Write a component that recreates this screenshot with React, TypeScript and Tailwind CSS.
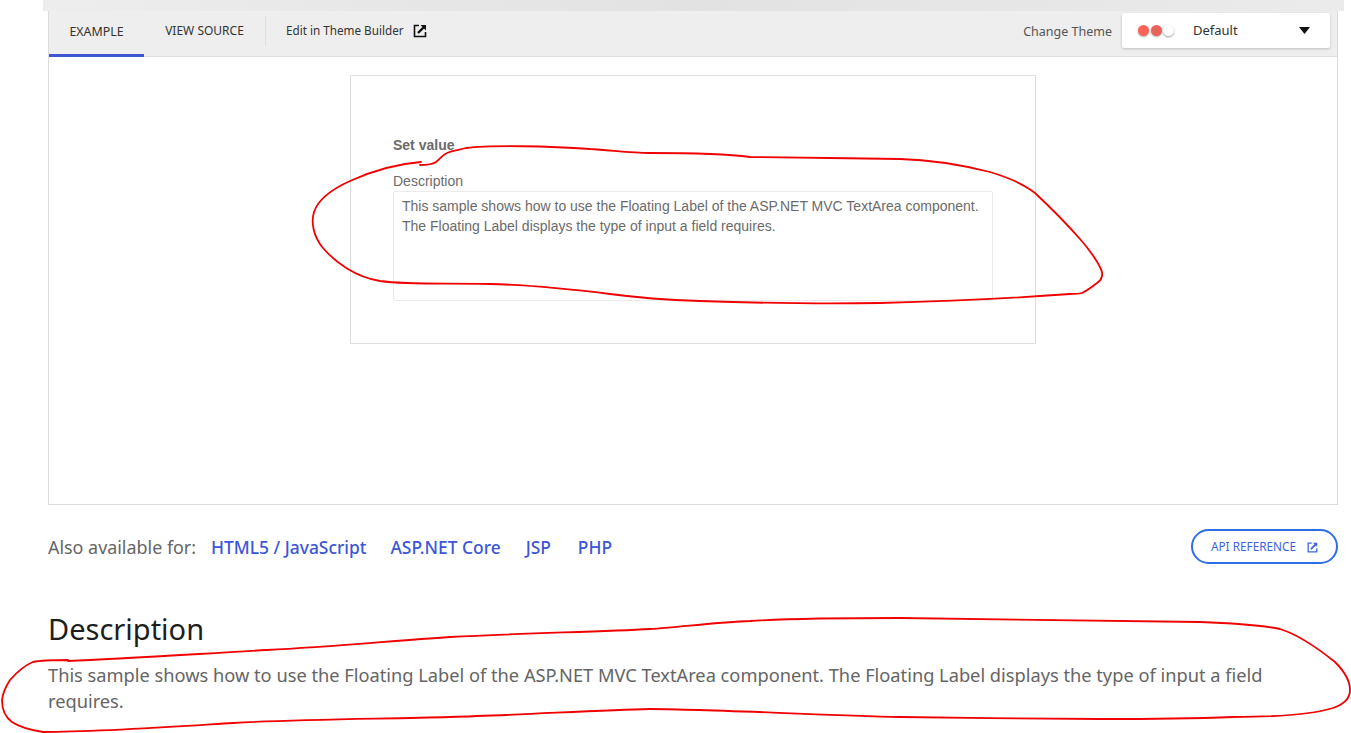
import React from "react";

const ExtIcon = ({ className }: { className: string }) => (
  <svg viewBox="0 0 14 14" className={className} fill="none" stroke="currentColor">
    <path d="M6 1.5H1.5v11h11V8" strokeWidth="1.6" />
    <path d="M7.5 1H13v5.5z" fill="currentColor" stroke="none" />
    <path d="M5 9l6-6" strokeWidth="2.4" />
  </svg>
);

export default function App() {
  return (
    <div className="relative h-[733px] overflow-hidden bg-white font-['Noto_Sans',sans-serif]">
      <div className="ml-[43px] h-[11px] w-[1301px] bg-gradient-to-r from-[#ededed] via-[#e2e2e2] to-[#ebebeb]" />
      <div className="ml-[48px] flex h-[494px] w-[1290px] flex-col border-x border-b border-[#dcdcdc]">
        <div className="flex h-[46px] shrink-0 items-stretch border-b border-[#dedede] bg-[#eeeeee] pr-[7px]">
          <div className="-mb-px flex w-[95px] items-center justify-center border-b-[3px] border-[#3c56d6] pb-[1px] text-[12.4px] text-[#333]">
            EXAMPLE
          </div>
          <div className="flex flex-1 items-center pb-[6px]">
            <div className="mt-[1px] flex w-[121px] items-center justify-center text-[12px] text-[#333]">VIEW SOURCE</div>
            <div className="h-[30px] w-px bg-[#dddddd]" />
            <div className="ml-[20px] mt-[1px] text-[11.7px] text-[#333]">Edit in Theme Builder</div>
            <ExtIcon className="ml-[9px] h-[14px] w-[14px] text-[#111]" />
            <div className="ml-auto mt-[3px] text-[12.5px] text-[#555]">Change Theme</div>
            <div className="ml-[10px] flex h-[35px] w-[208px] items-center rounded-[2px] bg-white pl-[16px] pr-[20px] shadow-[0_1px_3px_rgba(0,0,0,0.2)]">
              <span className="h-[11px] w-[11px] rounded-full bg-[#ff6358] shadow-[0_1px_2px_rgba(0,0,0,0.3)]" />
              <span className="ml-[2px] h-[11px] w-[11px] rounded-full bg-[#e9635a] shadow-[0_1px_2px_rgba(0,0,0,0.3)]" />
              <span className="ml-[1px] h-[11px] w-[11px] rounded-full bg-white shadow-[0_1px_2px_rgba(0,0,0,0.4)]" />
              <span className="ml-[19px] mt-[1px] text-[13px] text-[#333]">Default</span>
              <svg viewBox="0 0 11 7" className="ml-auto h-[7px] w-[11px] text-[#111]">
                <path d="M0 0h11L5.5 7z" fill="currentColor" />
              </svg>
            </div>
          </div>
        </div>
        <div className="flex flex-1 justify-center pt-[18px]">
          <div className="h-[269px] w-[686px] border border-[#dedede] pl-[42px] pt-[61px] font-['Liberation_Sans',sans-serif] text-[14px] text-[#6b6b6b]">
            <div className="text-[14px] font-bold leading-[17px]">Set value</div>
            <div className="mt-[19px] leading-[17px]">Description</div>
            <div className="mt-[1px] h-[110px] w-[600px] rounded-[2px] border border-[#ebebeb] px-[8px] py-[4px] leading-[20px]">
              This sample shows how to use the Floating Label of the ASP.NET MVC TextArea component.
              <br />
              The Floating Label displays the type of input a field requires.
            </div>
          </div>
        </div>
      </div>
      <div className="ml-[48px] mt-[24px] flex h-[35px] w-[1290px] items-center">
        <div className="mt-[2px] flex items-center">
          <span className="text-[17.9px] text-[#656565]">Also available for:</span>
          <a className="ml-[15px] text-[17.4px] font-medium text-[#3c56d6]">HTML5 / JavaScript</a>
          <a className="ml-[24px] text-[17.4px] font-medium text-[#3c56d6]">ASP.NET Core</a>
          <a className="ml-[25px] text-[17.4px] font-medium text-[#3c56d6]">JSP</a>
          <a className="ml-[27px] text-[17.4px] font-medium text-[#3c56d6]">PHP</a>
        </div>
        <div className="ml-auto flex h-[35px] w-[147px] items-center justify-center gap-[11px] rounded-[18px] border-2 border-[#2f6fe4] pt-[1px] text-[11.8px] text-[#3c64e0]">
          API REFERENCE
          <ExtIcon className="h-[11px] w-[11px]" />
        </div>
      </div>
      <h2 className="ml-[48px] mt-[43px] text-[29px] font-normal leading-[44px] text-[#1e1e1e]">Description</h2>
      <p className="ml-[48px] mt-[11px] w-[1250px] text-[18.24px] leading-[26px] text-[#656565]">
        This sample shows how to use the Floating Label of the ASP.NET MVC TextArea component. The Floating Label displays the type of input a field requires.
      </p>
      <svg className="pointer-events-none absolute left-0 top-0 h-[733px] w-[1351px]" viewBox="0 0 1351 733" fill="none" stroke="#f00000" strokeWidth="1.8" strokeLinecap="round" strokeLinejoin="round">
        <path d="M420 165 C426 165 433 164 436 162 C440 159 442 155 447 153 C453 150 460 150 466 148 C490 145 550 146 590 149 C610 150 630 153 650 153 C680 153 720 153 750 157 C790 158 850 158 900 159 C940 160 970 167 990 172 C1010 178 1025 185 1035 193 C1050 207 1065 222 1080 239 C1090 250 1100 265 1102 272 C1103 278 1100 281 1097 283 C1092 287 1086 291 1082 293 C1078 294 1074 294 1070 294 C1030 297 960 301 880 303 C830 304 760 303 700 301 C670 300 640 298 610 294 C570 289 530 285 490 284 C440 283 410 285 380 281 C355 277 335 262 323 248 C313 236 311 222 314 212 C318 200 330 190 350 181 C370 172 395 164 421 162" />
        <path d="M68 660 L68 661 C120 659 180 655 267 650 C330 647 390 641 450 637 C520 633 600 632 650 629 C680 627 720 622 750 621 C780 619 840 618 900 618 C1000 619 1100 620 1200 622 C1230 623 1260 625 1280 629 C1300 635 1320 650 1335 662 C1345 672 1350 682 1350 690 C1350 698 1345 704 1333 708 C1310 715 1270 717 1233 717 C1180 719 1140 719 1100 719 C1050 719 960 718 900 717 C820 715 700 709 650 709 C600 710 520 715 450 717 C380 719 300 719 233 723 C170 727 100 732 43 732 C30 730 18 726 12 722 C5 717 2 708 2 700 C3 692 6 686 10 680 C17 672 23 666 33 662 C42 660 55 660 68 660" />
      </svg>
    </div>
  );
}
